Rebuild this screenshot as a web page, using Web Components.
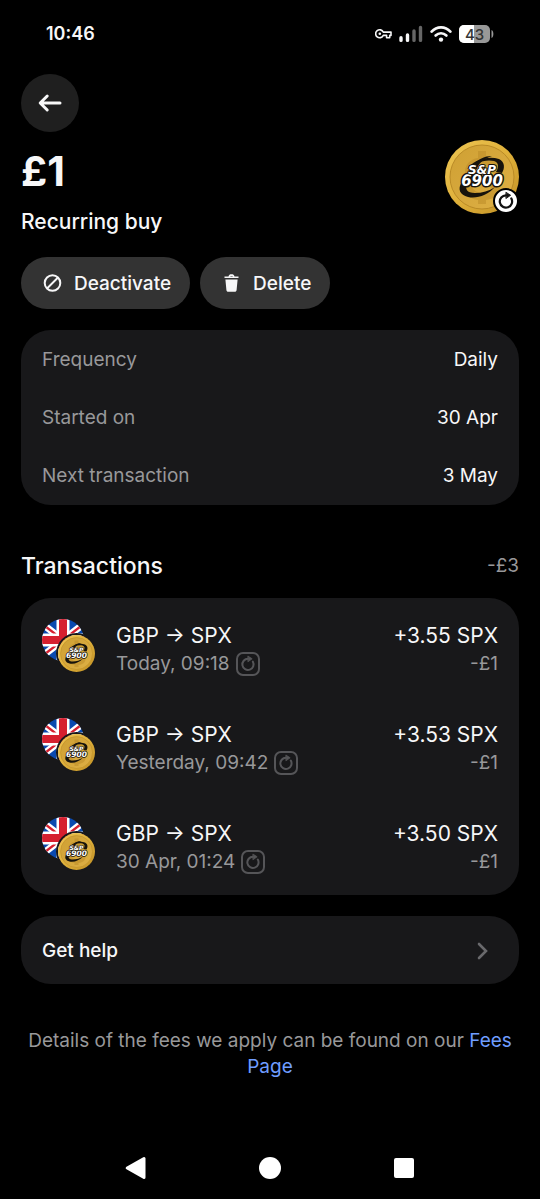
<!DOCTYPE html>
<html lang="en">
<head>
<meta charset="UTF-8">
<meta name="viewport" content="width=device-width, initial-scale=1">
<title>Recurring buy</title>
<style>
    :root {
        --bg: #000000;
        --card: #18181a;
        --button: #333333;
        --text: #f7f7f8;
        --muted: #98989a;
        --faint: #555558;
        --link: #6f9dff;
    }

    body {
        margin: 0;
        background: var(--bg);
        color: var(--text);
        font-family: Inter, Roboto, "Liberation Sans", sans-serif;
        font-size: 19px;
        line-height: 26px;
    }
</style>
</head>
<body>
<recurring-buy-page></recurring-buy-page>

<script>
class StatusBar extends HTMLElement {
    constructor() {
        super();
        this.attachShadow({ mode: 'open' });
    }

    connectedCallback() {
        this.shadowRoot.innerHTML = `
            <style>
                :host {
                    display: flex;
                    align-items: center;
                    justify-content: space-between;
                    height: 64px;
                    padding: 2px 46px 0;
                    font-size: 18px;
                    font-weight: 600;
                }

                .icons {
                    display: flex;
                    align-items: center;
                    gap: 7px;
                }

                svg {
                    display: block;
                }
            </style>
            <time>${this.getAttribute('time')}</time>
            <div class="icons">
                <svg width="17" height="12" viewBox="0 0 17 12" fill="none" stroke="#f7f7f8" stroke-width="1.6" stroke-linejoin="round">
                    <path d="M8.3 4.1 H16 V7.4 H14.7 V9.8 H11.6 V7.4 H8.3 A4 4 0 1 1 8.3 4.1 Z"/>
                    <circle cx="4.8" cy="5.7" r="1.3" fill="#f7f7f8" stroke="none"/>
                </svg>
                <svg width="24" height="18" viewBox="0 0 24 18" stroke-width="3.4" stroke-linecap="round">
                    <path d="M2 12.8 V15.4 M8.5 10 V15.4" stroke="#f7f7f8"/>
                    <path d="M15 6 V15.4 M21.5 2.4 V15.4" stroke="#666"/>
                </svg>
                <svg width="22" height="18" viewBox="0 0 22 18" fill="none" stroke="#f7f7f8" stroke-width="2.6" stroke-linecap="round">
                    <path d="M1.6 6.6 C6.7 0.9 15.3 0.9 20.4 6.6"/>
                    <path d="M5.6 10.5 C8.7 7.4 13.3 7.4 16.4 10.5"/>
                    <circle cx="11" cy="14.6" r="2.2" fill="#f7f7f8" stroke="none"/>
                </svg>
                <svg width="35" height="18" viewBox="0 0 35 18">
                    <rect width="31" height="18" rx="5" fill="#989898"/>
                    <path d="M5 0 H15 V18 H5 A5 5 0 0 1 0 13 V5 A5 5 0 0 1 5 0 Z" fill="#ffffff"/>
                    <path d="M32.5 5 C35 6 35 12 32.5 13 Z" fill="#989898"/>
                    <text x="15.5" y="14.5" text-anchor="middle" font-size="15" font-weight="500" fill="#333333">${this.getAttribute('battery')}</text>
                </svg>
            </div>
        `;
    }
}

class CoinIcon extends HTMLElement {
    constructor() {
        super();
        this.attachShadow({ mode: 'open' });
    }

    connectedCallback() {
        this.shadowRoot.innerHTML = `
            <style>
                :host {
                    display: block;
                    width: var(--coin-size, 74px);
                    height: var(--coin-size, 74px);
                }

                svg {
                    display: block;
                    width: 100%;
                    height: 100%;
                }
            </style>
            <svg viewBox="0 0 74 74" role="img" aria-label="SPX coin">
                <defs>
                    <linearGradient id="rim" x1="0" y1="0" x2="1" y2="1">
                        <stop offset="0" stop-color="#eec654"/>
                        <stop offset="0.5" stop-color="#dfb03a"/>
                        <stop offset="1" stop-color="#c08f24"/>
                    </linearGradient>
                    <linearGradient id="face" x1="0" y1="0" x2="1" y2="1">
                        <stop offset="0" stop-color="#cfa033"/>
                        <stop offset="1" stop-color="#deb045"/>
                    </linearGradient>
                </defs>
                <circle cx="37" cy="37" r="37" fill="url(#rim)"/>
                <circle cx="37" cy="37" r="32" fill="url(#face)" stroke="#b98a26" stroke-width="1"/>
                <path d="M33 11 H41 V18 C50 19 55 25 55 33 H47 C45 24 29 24 28 32 C27 39 55 37 55 49 C54 56 48 59 41 60 V64 H33 V60 C25 59 20 54 19 47 H27 C30 55 45 54 46 48 C45 41 20 44 20 32 C20 25 25 19 33 18 Z" fill="#b98a26" opacity="0.5"/>
                <path d="M22 29 C27 21 42 15 54 19 C60 22 60 28 57 33 L51 32 C54 27 54 23 49 21 C40 19 29 23 22 29 Z" fill="#17130c"/>
                <path d="M27 28 C31 19 40 16 47 16 C38 19 33 24 32 29 Z" fill="#17130c"/>
                <path d="M17 42 L23 43 C19 49 22 53 30 53 C37 53 44 51 50 47 C43 55 32 59 23 57 C15 55 12 49 17 42 Z" fill="#17130c"/>
                <g font-family="DejaVu Sans, Verdana, sans-serif" font-weight="700" font-style="italic" text-anchor="middle" fill="#ffffff" stroke="#17130c" stroke-width="3" stroke-linejoin="round" paint-order="stroke">
                    <text x="37" y="46" font-size="15">6900</text>
                    <text x="37" y="34" font-size="12" stroke-width="2">S&amp;P</text>
                </g>
            </svg>
        `;
    }
}

class RepeatIcon extends HTMLElement {
    constructor() {
        super();
        this.attachShadow({ mode: 'open' });
    }

    connectedCallback() {
        this.shadowRoot.innerHTML = `
            <style>
                :host {
                    display: block;
                    box-sizing: border-box;
                    width: 24px;
                    height: 24px;
                    border: 2px solid var(--faint);
                    border-radius: 7px;
                    color: var(--faint);
                }

                :host([round]) {
                    width: 26px;
                    height: 26px;
                    border: 2px solid var(--bg);
                    border-radius: 50%;
                    background: #ffffff;
                    color: #111111;
                }

                svg {
                    display: block;
                    width: 100%;
                    height: 100%;
                }
            </style>
            <svg viewBox="0 0 20 20" fill="none" stroke="currentColor" stroke-width="2" stroke-linecap="round" stroke-linejoin="round" aria-hidden="true">
                <path d="M14.8 7.6 A5.6 5.6 0 1 1 10 4.8"/>
                <path d="M10.2 2.2 L14.2 4.8 L10.2 7.6 Z" fill="currentColor" stroke-width="0.8"/>
            </svg>
        `;
    }
}

class ActionButton extends HTMLElement {
    constructor() {
        super();
        this.attachShadow({ mode: 'open' });
    }

    connectedCallback() {
        this.shadowRoot.innerHTML = `
            <style>
                :host {
                    display: block;
                }

                button {
                    display: flex;
                    align-items: center;
                    gap: 11px;
                    height: 52px;
                    padding: 2px 19px 0 21px;
                    border: none;
                    border-radius: 26px;
                    background: var(--button);
                    color: var(--text);
                    font: inherit;
                    font-weight: 500;
                    cursor: pointer;
                }
            </style>
            <button type="button"><slot name="icon"></slot><slot></slot></button>
        `;
    }
}

class SurfaceCard extends HTMLElement {
    constructor() {
        super();
        this.attachShadow({ mode: 'open' });
    }

    connectedCallback() {
        this.shadowRoot.innerHTML = `
            <style>
                :host {
                    display: block;
                    border-radius: 30px;
                    background: var(--card);
                    overflow: hidden;
                }
            </style>
            <slot></slot>
        `;
    }
}

class DetailRow extends HTMLElement {
    constructor() {
        super();
        this.attachShadow({ mode: 'open' });
    }

    connectedCallback() {
        this.shadowRoot.innerHTML = `
            <style>
                :host {
                    display: flex;
                    align-items: center;
                    justify-content: space-between;
                    padding: 17px 21px 15px;
                }

                .label {
                    color: var(--muted);
                }
            </style>
            <span class="label">${this.getAttribute('label')}</span>
            <span><slot></slot></span>
        `;
    }
}

class TransactionRow extends HTMLElement {
    constructor() {
        super();
        this.attachShadow({ mode: 'open' });
    }

    connectedCallback() {
        this.shadowRoot.innerHTML = `
            <style>
                :host {
                    display: flex;
                    align-items: center;
                    gap: 21px;
                    box-sizing: border-box;
                    height: 99px;
                    padding: 0 21px;
                }

                .pair {
                    position: relative;
                    flex: none;
                    width: 53px;
                    height: 53px;
                    margin-bottom: 4px;
                }

                .flag {
                    display: block;
                    width: 42px;
                    height: 42px;
                }

                .coin {
                    --coin-size: 37px;
                    position: absolute;
                    right: 0;
                    bottom: 0;
                    border-radius: 50%;
                    box-shadow: 0 0 0 2px var(--card);
                }

                .info,
                .amounts {
                    padding-top: 4px;
                }

                .info {
                    flex: 1;
                }

                .amounts {
                    text-align: right;
                }

                .title {
                    font-size: 21px;
                    line-height: 28px;
                }

                .sub {
                    display: flex;
                    align-items: center;
                    gap: 6px;
                    line-height: 28px;
                    color: var(--muted);
                }

                .amounts .sub {
                    justify-content: flex-end;
                }
            </style>
            <div class="pair">
                <svg class="flag" viewBox="0 0 42 42" aria-hidden="true">
                    <clipPath id="round"><circle cx="21" cy="21" r="21"/></clipPath>
                    <g clip-path="url(#round)">
                        <rect width="42" height="42" fill="#0a4ab0"/>
                        <path d="M-6 0 L48 42 M48 0 L-6 42" stroke="#ffffff" stroke-width="7"/>
                        <path d="M-6 0 L48 42 M48 0 L-6 42" stroke="#d6202f" stroke-width="2.4"/>
                        <path d="M21 0 V42 M0 21 H42" stroke="#ffffff" stroke-width="13"/>
                        <path d="M21 0 V42 M0 21 H42" stroke="#d6202f" stroke-width="8"/>
                    </g>
                </svg>
                <coin-icon class="coin"></coin-icon>
            </div>
            <div class="info">
                <div class="title">GBP → SPX</div>
                <div class="sub">${this.getAttribute('date')}<repeat-icon></repeat-icon></div>
            </div>
            <div class="amounts">
                <div class="title">${this.getAttribute('received')}</div>
                <div class="sub">${this.getAttribute('paid')}</div>
            </div>
        `;
    }
}

class NavigationBar extends HTMLElement {
    constructor() {
        super();
        this.attachShadow({ mode: 'open' });
    }

    connectedCallback() {
        this.shadowRoot.innerHTML = `
            <style>
                :host {
                    display: grid;
                    grid-template-columns: repeat(3, 1fr);
                    padding: 0 69px;
                }

                button {
                    display: flex;
                    justify-content: center;
                    padding: 19px 0;
                    border: none;
                    background: none;
                    cursor: pointer;
                }
            </style>
            <button type="button" aria-label="Back">
                <svg width="24" height="24" viewBox="0 0 24 24" fill="#fff" stroke="#fff" stroke-width="3" stroke-linejoin="round"><path d="M3.2 12 L20 2.6 V21.4 Z"/></svg>
            </button>
            <button type="button" aria-label="Home">
                <svg width="24" height="24" viewBox="0 0 24 24" fill="#fff"><circle cx="12" cy="12" r="11"/></svg>
            </button>
            <button type="button" aria-label="Recent apps">
                <svg width="24" height="24" viewBox="0 0 24 24" fill="#fff"><rect x="2" y="2" width="20" height="20" rx="2"/></svg>
            </button>
        `;
    }
}

class RecurringBuyPage extends HTMLElement {
    constructor() {
        super();
        this.attachShadow({ mode: 'open' });
    }

    connectedCallback() {
        this.shadowRoot.innerHTML = `
            <style>
                :host {
                    display: flex;
                    flex-direction: column;
                    min-height: 100vh;
                }

                main {
                    flex: 1;
                    padding: 8px 21px 24px;
                }

                svg {
                    display: block;
                }

                .back {
                    display: flex;
                    align-items: center;
                    justify-content: center;
                    width: 58px;
                    height: 58px;
                    padding: 0;
                    border: none;
                    border-radius: 50%;
                    background: #1f1f1f;
                    cursor: pointer;
                }

                .summary {
                    display: flex;
                    justify-content: space-between;
                    margin-top: 8px;
                }

                h1 {
                    margin: 6px 0 0;
                    font-size: 41px;
                    line-height: 50px;
                    font-weight: 700;
                }

                .summary p {
                    margin: 12px 0 0;
                    font-size: 21px;
                    line-height: 28px;
                    font-weight: 500;
                }

                .asset {
                    position: relative;
                    height: 74px;
                }

                .asset repeat-icon {
                    position: absolute;
                    right: 0;
                    bottom: 0;
                }

                .actions {
                    display: flex;
                    gap: 10px;
                    margin-top: 21px;
                }

                .details {
                    margin-top: 21px;
                    padding-bottom: 1px;
                }

                .section {
                    display: flex;
                    align-items: center;
                    justify-content: space-between;
                    margin: 47px 0 18px;
                }

                h2 {
                    margin: 0;
                    font-size: 23px;
                    line-height: 28px;
                    font-weight: 500;
                }

                .total {
                    color: var(--muted);
                }

                .help {
                    margin-top: 21px;
                }

                .help button {
                    display: flex;
                    align-items: center;
                    justify-content: space-between;
                    width: 100%;
                    height: 68px;
                    padding: 2px 29px 0 21px;
                    border: none;
                    background: none;
                    color: var(--text);
                    font: inherit;
                    font-weight: 500;
                    cursor: pointer;
                }

                .fees {
                    margin: 44px 0 0;
                    color: var(--muted);
                    text-align: center;
                }

                .fees a {
                    color: var(--link);
                    text-decoration: none;
                }
            </style>
            <status-bar time="10:46" battery="43"></status-bar>
            <main>
                <button class="back" type="button" aria-label="Back">
                    <svg width="24" height="20" viewBox="0 0 24 20" fill="none" stroke="#f7f7f8" stroke-width="3" stroke-linecap="round" stroke-linejoin="round"><path d="M22 10 H3 M9.2 3 L2.2 10 L9.2 17"/></svg>
                </button>
                <header class="summary">
                    <div>
                        <h1>£1</h1>
                        <p>Recurring buy</p>
                    </div>
                    <div class="asset">
                        <coin-icon></coin-icon>
                        <repeat-icon round></repeat-icon>
                    </div>
                </header>
                <div class="actions">
                    <action-button>
                        <svg slot="icon" width="21" height="20" viewBox="0 0 21 20" fill="none" stroke="#f7f7f8" stroke-width="2"><circle cx="10.5" cy="9" r="7.8"/><path d="M5 14.5 L16 3.5"/></svg>
                        Deactivate
                    </action-button>
                    <action-button>
                        <svg slot="icon" width="21" height="20" viewBox="0 0 21 20" fill="#f7f7f8"><path d="M3.5 4.1 V2.5 H7.5 C7.8 0.8 8.8 0.3 10.5 0.3 C12.2 0.3 13.2 0.8 13.5 2.5 H17.5 V4.1 Z M9 2.5 H12 C11.8 1.8 9.2 1.8 9 2.5 Z" fill-rule="evenodd"/><path d="M4.4 5.5 H16.6 L15.6 16 C15.5 17.2 14.8 17.8 13.8 17.8 H7.2 C6.2 17.8 5.5 17.2 5.4 16 Z"/></svg>
                        Delete
                    </action-button>
                </div>
                <surface-card class="details">
                    <detail-row label="Frequency">Daily</detail-row>
                    <detail-row label="Started on">30 Apr</detail-row>
                    <detail-row label="Next transaction">3 May</detail-row>
                </surface-card>
                <div class="section">
                    <h2>Transactions</h2>
                    <span class="total">-£3</span>
                </div>
                <surface-card>
                    <transaction-row date="Today, 09:18" received="+3.55 SPX" paid="-£1"></transaction-row>
                    <transaction-row date="Yesterday, 09:42" received="+3.53 SPX" paid="-£1"></transaction-row>
                    <transaction-row date="30 Apr, 01:24" received="+3.50 SPX" paid="-£1"></transaction-row>
                </surface-card>
                <surface-card class="help">
                    <button type="button">
                        Get help
                        <svg width="14" height="18" viewBox="0 0 14 18" fill="none" stroke="#69696c" stroke-width="2.6" stroke-linecap="round"><path d="M3 2 L10 9 L3 16"/></svg>
                    </button>
                </surface-card>
                <p class="fees">Details of the fees we apply can be found on our <a href="#fees">Fees Page</a></p>
            </main>
            <navigation-bar></navigation-bar>
        `;
    }
}

customElements.define('status-bar', StatusBar);
customElements.define('coin-icon', CoinIcon);
customElements.define('repeat-icon', RepeatIcon);
customElements.define('action-button', ActionButton);
customElements.define('surface-card', SurfaceCard);
customElements.define('detail-row', DetailRow);
customElements.define('transaction-row', TransactionRow);
customElements.define('navigation-bar', NavigationBar);
customElements.define('recurring-buy-page', RecurringBuyPage);
</script>
</body>
</html>
